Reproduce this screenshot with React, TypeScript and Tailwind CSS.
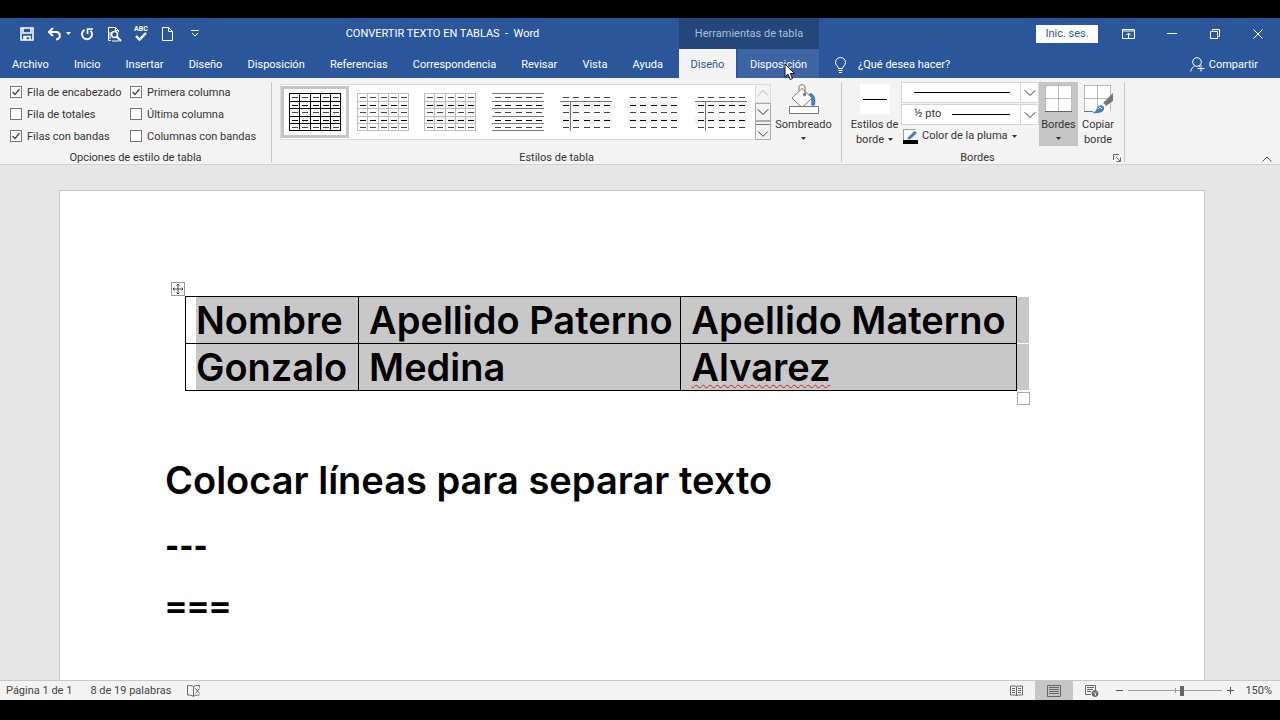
import type { ReactNode } from "react";
import { ChevronDown, ChevronUp } from "lucide-react";

const TABS = ["Archivo", "Inicio", "Insertar", "Diseño", "Disposición", "Referencias", "Correspondencia", "Revisar", "Vista", "Ayuda"];

const OPTIONS = [
  { id: "header-row", label: "Fila de encabezado", checked: true },
  { id: "first-col", label: "Primera columna", checked: true },
  { id: "total-row", label: "Fila de totales", checked: false },
  { id: "last-col", label: "Última columna", checked: false },
  { id: "banded-rows", label: "Filas con bandas", checked: true },
  { id: "banded-cols", label: "Columnas con bandas", checked: false },
];

const STYLES = [
  { name: "Tabla con cuadrícula", grid: "#000", selected: true },
  { name: "Cuadrícula clara", grid: "#bdbdbd" },
  { name: "Tabla normal 1", grid: "#bdbdbd", bands: true },
  { name: "Tabla normal 2", lines: true },
  { name: "Tabla normal 3", header: true, bands: true },
  { name: "Tabla normal 4", bands: true },
  { name: "Tabla normal 5", header: true, bands: true },
];

const COLS = [0, 10, 21, 31, 41];
const ROWS = [0, 8, 15, 23, 30];

type StyleProps = { grid?: string; bands?: boolean; lines?: boolean; header?: boolean };

function TableThumb({ grid, bands, lines, header }: StyleProps) {
  return (
    <svg width="52" height="39" viewBox="0 0 52 39" shapeRendering="crispEdges">
      {bands && [8, 23].map((y) => <rect key={y} y={y} width="52" height="8" fill="#f3f3f3" />)}
      {grid && [...COLS, 51].map((x) => <rect key={x} x={x} width="1" height="38" fill={grid} />)}
      {(grid || lines) &&
        [...ROWS, 37].map((y) => <rect key={y} y={y} width="52" height="1" fill={grid || "#777"} />)}
      {header && (
        <>
          <rect y="8" width="52" height="1" fill="#777" />
          <rect x="10" y="8" width="1" height="30" fill="#777" />
        </>
      )}
      {ROWS.map((y, r) =>
        COLS.map((x) => (
          <rect key={`${x}-${y}`} x={x + 3} y={y + 4} width="6" height="1" fill={r % 2 ? "#000" : "#444"} />
        ))
      )}
    </svg>
  );
}

function Caret({ className = "" }: { className?: string }) {
  return (
    <svg width="5" height="3" viewBox="0 0 5 3" className={className}>
      <path d="M0 0h5L2.500 3z" fill="currentColor" />
    </svg>
  );
}

function DottedGrid() {
  return (
    <>
      <rect x="1" y="1" width="27" height="27" fill="#fff" />
      <path d="M1.500 1.500h26M1.500 14.500h26M1.500 1.500v26M14.500 1.500v26M27.500 1.500v26" stroke="#777" strokeDasharray="1 1" fill="none" />
    </>
  );
}

function QatButton({ label, children, className = "" }: { label: string; children: ReactNode; className?: string }) {
  return (
    <button aria-label={label} className={`flex h-5 items-center justify-center ${className}`}>
      {children}
    </button>
  );
}

function QuickAccess() {
  return (
    <div className="flex w-[206px] shrink-0 items-center pl-4">
      <QatButton label="Guardar" className="w-[22px]">
        <svg width="14" height="14" viewBox="0 0 14 14" fill="none" stroke="#fff" strokeWidth="1.500">
          <path d="M1 1h12v12H1zM3 1v5h8V1M4 13V9.500h6V13" />
          <path d="M5.500 10v3" strokeWidth="2" />
        </svg>
      </QatButton>
      <QatButton label="Deshacer" className="ml-2 w-[26px] gap-1">
        <svg width="15" height="14" viewBox="0 0 15 14" fill="none" stroke="#fff" strokeWidth="2">
          <path d="M6 1L2 5l4 4M2 5h7c5 0 5 7 0 7.500" />
        </svg>
        <Caret className="text-white" />
      </QatButton>
      <QatButton label="Repetir" className="ml-1 w-[22px]">
        <svg width="14" height="14" viewBox="0 0 14 14" fill="none" stroke="#fff" strokeWidth="2">
          <path d="M4.500 2.800a5 5 0 1 0 6 .800" />
          <path d="M7.500 7V2H13" strokeWidth="1.700" />
        </svg>
      </QatButton>
      <QatButton label="Vista previa de impresión" className="ml-[6px] w-[20px]">
        <svg width="15" height="16" viewBox="0 0 15 16" fill="none" stroke="#fff">
          <path d="M4 14.500H1.500V1.500h7l3 3V6M8.500 1.500v3h3M5 15h7" />
          <circle cx="7.500" cy="8.500" r="3" strokeWidth="1.500" />
          <path d="M9.800 10.800L14 15" strokeWidth="2" />
          <path d="M3 6v7" />
        </svg>
      </QatButton>
      <QatButton label="Ortografía y gramática" className="ml-2 w-[18px] flex-col text-white">
        <span className="text-[7px] leading-[6px] font-bold">ABC</span>
        <svg width="12" height="9" viewBox="0 0 12 9" fill="none" stroke="#fff" strokeWidth="2.400">
          <path d="M1 4l3.500 3.500L11 1" />
        </svg>
      </QatButton>
      <QatButton label="Nuevo documento" className="ml-2 w-[18px]">
        <svg width="11" height="14" viewBox="0 0 11 14" fill="none" stroke="#fff">
          <path d="M.500.500h6l4 4v9H.500zM6.500.500v4h4" />
        </svg>
      </QatButton>
      <QatButton label="Personalizar barra" className="ml-3 w-[14px]">
        <svg width="8" height="7" viewBox="0 0 8 7" fill="none" stroke="#fff">
          <path d="M0 .500h8M1 3l3 3 3-3" />
        </svg>
      </QatButton>
    </div>
  );
}

function WindowButtons() {
  return (
    <div className="flex min-w-0 flex-1 items-center justify-end text-white">
      <button className="mr-[19px] h-[18px] w-[62px] bg-white text-[11px] leading-[18px] text-[#2b579a]">Inic. ses.</button>
      <button aria-label="Opciones de la cinta" className="flex h-7 w-[22px] items-center justify-center">
        <svg width="13" height="10" viewBox="0 0 13 10" fill="none" stroke="currentColor">
          <path d="M.500.500h12v9H.500zM0 2h13M6.500 9V4.500M4 6.500l2.500-2.500L9 6.500" />
        </svg>
      </button>
      <button aria-label="Minimizar" className="ml-[22px] flex h-7 w-[22px] items-center justify-center">
        <svg width="10" height="1" viewBox="0 0 10 1"><path d="M0 .500h10" stroke="currentColor" /></svg>
      </button>
      <button aria-label="Restaurar" className="ml-[22px] flex h-7 w-[20px] items-center justify-center">
        <svg width="10" height="10" viewBox="0 0 10 10" fill="none" stroke="currentColor">
          <path d="M.500 2.500h7v7h-7zM2.500 2.500v-2h7v7h-2" />
        </svg>
      </button>
      <button aria-label="Cerrar" className="mr-[11px] ml-[22px] flex h-7 w-[22px] items-center justify-center">
        <svg width="10" height="10" viewBox="0 0 10 10"><path d="M.500.500l9 9M9.500.500l-9 9" stroke="currentColor" /></svg>
      </button>
    </div>
  );
}

function Header() {
  return (
    <header className="bg-[#2b579a] text-white">
      <div className="flex h-[31px]">
        <div className="flex w-[679px] shrink-0 items-center">
          <QuickAccess />
          <h1 className="flex-1 pt-[2px] text-center text-[11px] whitespace-pre">CONVERTIR TEXTO EN TABLAS  -  Word</h1>
        </div>
        <div className="flex w-[140px] shrink-0 items-center justify-center bg-[#244678] pt-[2px] text-[11px] text-[#a9bfdf]">
          Herramientas de tabla
        </div>
        <WindowButtons />
      </div>
      <div className="flex h-[29px]">
        <nav className="flex w-[679px] shrink-0 items-center justify-between pt-1 pr-4 pl-3">
          {TABS.map((tab) => (
            <a key={tab} href="#">{tab}</a>
          ))}
        </nav>
        <a href="#" className="flex w-[57px] items-center justify-center bg-[#f3f3f3] pt-1 text-[#2b579a]">Diseño</a>
        <a href="#" className="relative ml-[2px] flex w-[81px] items-center justify-center bg-[#3e64a4] pt-1">
          Disposición
          <svg width="12" height="18" viewBox="0 0 12 18" className="absolute top-[14px] left-[46px] z-10">
            <path d="M1 1v13l3-2.800L6.200 16.500l2.300-1L6.300 10.500H10.500z" fill="#fff" stroke="#111" />
          </svg>
        </a>
        <div className="flex flex-1 items-center pt-[2px] pl-4">
          <svg width="11" height="16" viewBox="0 0 11 16" fill="none" stroke="#fff">
            <path d="M3.500 11.500c0-2-3-3-3-6a5 5 0 0 1 10 0c0 3-3 4-3 6zM3.500 13.500h4M4 15.500h3" />
          </svg>
          <a href="#" className="ml-3 pt-[2px]">¿Qué desea hacer?</a>
          <button className="mr-[22px] ml-auto flex items-center gap-1">
            <svg width="15" height="15" viewBox="0 0 15 15" fill="none" stroke="#fff">
              <circle cx="7" cy="5" r="4.300" />
              <path d="M.700 14.500c.500-3 2-4.500 4-5.500M9 9l1 .800M11 8v6.500M7.500 11.500H14.500" />
            </svg>
            <span className="pt-[2px]">Compartir</span>
          </button>
        </div>
      </div>
    </header>
  );
}

function Group({ label, className, launcher, children }: { label: string; className: string; launcher?: ReactNode; children: ReactNode }) {
  return (
    <section className={`flex shrink-0 flex-col ${className}`}>
      <div className="flex h-[72px]">{children}</div>
      <div className="flex items-center leading-3">
        <h2 className="flex-1 text-center">{label}</h2>
        {launcher}
      </div>
    </section>
  );
}

const Divider = () => <div className="my-[2px] w-px shrink-0 bg-[#c8c8c8]" />;

function PenSelect({ label, text, from }: { label: string; text?: string; from: string }) {
  return (
    <div className="relative flex h-[21px] items-center border border-[#d4d4d4] bg-white">
      <select aria-label={label} className="h-full w-full appearance-none pl-3 outline-none">
        <option>{text}</option>
      </select>
      <div className={`pointer-events-none absolute right-[28px] h-px bg-black ${from}`} />
      <div className="pointer-events-none absolute right-0 flex h-full w-[18px] items-center justify-center border-l border-[#d4d4d4]">
        <ChevronDown size={20} strokeWidth={1.200} className="shrink-0 text-[#333]" />
      </div>
    </div>
  );
}

function Ribbon() {
  return (
    <div className="flex h-[87px] overflow-hidden border-b border-[#d2d2d2] bg-[#f3f3f3] pt-[2px] text-[#333]">
      <Group label="Opciones de estilo de tabla" className="w-[271px]">
        <div className="grid grid-cols-[120px_1fr] content-start gap-y-[2px] pt-[2px] pl-[10px]">
          {OPTIONS.map((o) => (
            <label key={o.id} htmlFor={o.id} className="flex h-5 items-center gap-[5px] whitespace-nowrap">
              <span className="grid">
                <input
                  id={o.id}
                  type="checkbox"
                  defaultChecked={o.checked}
                  className="peer size-3 appearance-none border border-[#777] bg-white [grid-area:1/1]"
                />
                <svg width="12" height="12" viewBox="0 0 12 12" fill="none" stroke="#444" strokeWidth="1.300" className="pointer-events-none invisible [grid-area:1/1] peer-checked:visible">
                  <path d="M2.500 6l2.500 2.500L9.500 3" />
                </svg>
              </span>
              <span className="pt-[2px]">{o.label}</span>
            </label>
          ))}
        </div>
      </Group>
      <Divider />
      <Group label="Estilos de tabla" className="w-[569px]">
        <div className="mt-1 ml-2 flex h-[56px] w-[491px]">
          <div className="flex flex-1 items-center border border-r-0 border-[#dcdcdc] bg-white">
            {STYLES.map((s) => (
              <button
                key={s.name}
                aria-label={s.name}
                className={`flex h-[52px] flex-1 items-center justify-center border-[3px] ${s.selected ? "border-[#c6c6c6]" : "border-transparent"}`}
              >
                <TableThumb grid={s.grid} bands={s.bands} lines={s.lines} header={s.header} />
              </button>
            ))}
          </div>
          <div className="flex w-4 flex-col">
            <button aria-label="Fila anterior" className="flex flex-1 items-center justify-center overflow-hidden border border-[#dcdcdc] text-[#bbb]">
              <ChevronUp size={20} strokeWidth={1.200} className="shrink-0" />
            </button>
            <button aria-label="Fila siguiente" className="flex flex-1 items-center justify-center overflow-hidden border border-[#ababab] text-[#333]">
              <ChevronDown size={20} strokeWidth={1.200} className="shrink-0" />
            </button>
            <button aria-label="Más estilos" className="flex flex-1 flex-col items-center overflow-hidden border border-[#ababab] text-[#333]">
              <span className="mt-[2px] h-px w-full shrink-0 bg-[#777]" />
              <ChevronDown size={18} strokeWidth={1.200} className="shrink-0" />
            </button>
          </div>
        </div>
        <button className="flex w-[65px] flex-col items-center pt-1 leading-[15px]">
          <svg width="31" height="31" viewBox="0 0 31 31" fill="none" stroke="#777">
            <path d="M22 9c5 1 6 6 5 12-1 1-3 1-4 0 1-4 0-7-3-9z" fill="#4a7ebb" stroke="none" />
            <path d="M4 14L14 4.500 24 14 14 23.500z" fill="#fff" />
            <path d="M11 7V3c0-3 6-3 6 0v7" />
            <circle cx="16.500" cy="10.500" r="1.300" fill="#777" />
            <path d="M1.500 22.500h29v7h-29z" fill="#fff" />
          </svg>
          <span className="mt-[2px]">Sombreado</span>
          <Caret className="mt-[5px]" />
        </button>
      </Group>
      <Divider />
      <Group
        label="Bordes"
        className="w-[282px]"
        launcher={
          <button aria-label="Bordes y sombreado" className="mr-[3px]">
            <svg width="8" height="8" viewBox="0 0 8 8" fill="none" stroke="#666">
              <path d="M.500 6V.500H6M3 3l4 4M7.500 3.500v4h-4" />
            </svg>
          </button>
        }
      >
        <button className="flex w-[59px] flex-col items-center pt-1 pl-[6px] leading-[15px] whitespace-nowrap">
          <span className="mb-[3px] flex h-[30px] w-[30px] shrink-0 items-center justify-center bg-white">
            <span className="h-px w-6 bg-black" />
          </span>
          <span>Estilos de</span>
          <span className="flex items-center gap-1">borde <Caret /></span>
        </button>
        <div className="flex w-[138px] flex-col gap-px pt-[2px]">
          <PenSelect label="Estilo de pluma" from="left-3" />
          <PenSelect label="Grosor de pluma" text="½ pto" from="left-[50px]" />
          <button className="flex h-5 items-center gap-1 whitespace-nowrap">
            <svg width="15" height="15" viewBox="0 0 15 15" className="ml-[2px]">
              <path d="M.500 11V.500h12" stroke="#999" fill="#fff" />
              <path d="M5 8.500L11.500 2 14 4 7.500 10 4.500 10.500z" fill="#4a7ebb" />
              <rect y="11" width="15" height="4" />
            </svg>
            Color de la pluma
            <Caret />
          </button>
        </div>
        <button className="mt-[2px] flex h-[64px] w-[39px] flex-col items-center bg-[#c6c6c6] pt-[2px] leading-[15px]">
          <svg width="29" height="31" viewBox="0 0 29 31">
            <DottedGrid />
            <path d="M1 27.500h27" stroke="#666" />
          </svg>
          <span className="mt-[2px]">Bordes</span>
          <Caret className="mt-[5px]" />
        </button>
        <button className="mt-[2px] flex w-[40px] flex-col items-center pt-[2px] leading-[15px]">
          <svg width="31" height="33" viewBox="0 0 31 33">
            <DottedGrid />
            <path d="M1 27.500h9" stroke="#4a7ebb" />
            <path d="M30 9v8l-7 5-3-3z" fill="#777" />
            <path d="M19 19l3.500 3.500" stroke="#fff" strokeWidth="1.500" />
            <path d="M9 29c3-1 4-2 5-5 1-3 5-4 7-1 1 4-3 7-12 6z" fill="#4a7ebb" />
            <path d="M15 25c1-2 3-2 4 0" stroke="#fff" fill="none" />
          </svg>
          <span>Copiar</span>
          <span>borde</span>
        </button>
      </Group>
      <Divider />
      <button aria-label="Contraer la cinta" className="mt-auto mr-2 mb-[2px] ml-auto">
        <svg width="10" height="6" viewBox="0 0 10 6" fill="none" stroke="#555"><path d="M.500 5.500L5 1l4.500 4.500" /></svg>
      </button>
    </div>
  );
}

const CELL = "border border-black bg-[#c8c8c8] pl-[10px] pr-[10px] bg-clip-padding";

function RowEnd() {
  return <td className="w-3 border-b border-white bg-[#c8c8c8] bg-clip-padding" />;
}

function Document() {
  return (
    <main className="flex min-h-0 flex-1 overflow-hidden bg-[#e6e6e6] pr-4">
      <article className="mx-auto mt-[25px] w-[1146px] border border-b-0 border-[#c8c8c8] bg-white pt-[105px] pl-[105px] font-['Century_Gothic','Inter',sans-serif] text-[38px] leading-[46px] font-semibold text-black">
        <div className="relative ml-5 w-fit">
          <button aria-label="Mover tabla" className="absolute -top-[14px] -left-[14px] flex size-[14px] items-center justify-center border border-[#999] bg-white">
            <svg width="10" height="10" viewBox="0 0 10 10" fill="none" stroke="#444">
              <path d="M5 0v10M0 5h10M3.500 1.500L5 0l1.500 1.500M3.500 8.500L5 10l1.500-1.500M1.500 3.500L0 5l1.500 1.500M8.500 3.500L10 5 8.500 6.500" />
            </svg>
          </button>
          <table className="w-[844px] table-fixed border-collapse whitespace-nowrap">
            <colgroup>
              <col className="w-[173px]" />
              <col className="w-[322px]" />
              <col className="w-[336px]" />
              <col />
            </colgroup>
            <tbody>
              <tr>
                <td className="border border-black pl-[10px]"><div className="bg-[#c8c8c8]">Nombre</div></td>
                <td className={CELL}>Apellido Paterno</td>
                <td className={CELL}>Apellido Materno</td>
                <RowEnd />
              </tr>
              <tr>
                <td className="border border-black pl-[10px]"><div className="bg-[#c8c8c8]">Gonzalo</div></td>
                <td className={CELL}>Medina</td>
                <td className={CELL}>
                  <span className="underline decoration-[#c8202a] decoration-wavy decoration-1 underline-offset-[3px]">Alvarez</span>
                </td>
                <RowEnd />
              </tr>
            </tbody>
          </table>
          <span className="absolute -right-px -bottom-[14px] size-[13px] border border-[#ababab] bg-white" />
        </div>
        <p className="mt-[66px]">Colocar líneas para separar texto</p>
        <p className="mt-[18px] font-['Lato'] font-black">---</p>
        <p className="mt-[15px] font-['Lato'] font-black">===</p>
      </article>
    </main>
  );
}

function StatusBar() {
  return (
    <footer className="flex h-5 items-center border-t border-[#c8c8c8] bg-[#f3f3f3] pl-[6px] text-[11px] text-[#444]">
      <span className="pt-[2px]">Página 1 de 1</span>
      <span className="ml-[18px] pt-[2px]">8 de 19 palabras</span>
      <button aria-label="Revisión" className="ml-4">
        <svg width="14" height="12" viewBox="0 0 14 12" fill="none" stroke="#666">
          <path d="M6.500 11V1.500C5 .500 3 .500.500.500v9.500c2 0 4 0 6 1.500 1-1 3-1.500 6-1.500M6.500 1.500c1-.700 3-1 6-1v2M8.500 3.500l4 5M12.500 3.500l-4 5" />
        </svg>
      </button>
      <div className="ml-auto flex h-full items-center">
        <button aria-label="Modo de lectura" className="flex h-full w-[38px] items-center justify-center">
          <svg width="13" height="12" viewBox="0 0 13 12" fill="none" stroke="#666">
            <path d="M.500 1h5l1 1 1-1h5v9h-5l-1 1-1-1h-5zM6.500 2v9M2 3.500h3M2 5.500h3M2 7.500h3M8 3.500h3M8 5.500h3M8 7.500h3" />
          </svg>
        </button>
        <button aria-label="Diseño de impresión" className="flex h-full w-[38px] items-center justify-center bg-[#c6c6c6]">
          <svg width="14" height="12" viewBox="0 0 14 12" fill="none" stroke="#666">
            <path d="M.500.500h13v11H.500zM2 2.500h10M2 4.500h10M2 6.500h10M2 8.500h10" />
          </svg>
        </button>
        <button aria-label="Diseño web" className="flex h-full w-[38px] items-center justify-center">
          <svg width="14" height="12" viewBox="0 0 14 12" fill="none" stroke="#666">
            <path d="M6 9.500H.500v-9h10V5M2 2.500h7M2 4.500h6M2 6.500h4" />
            <circle cx="10" cy="8.500" r="3" fill="#666" />
            <path d="M8.500 7.500l2 1v2M11 6.500l1 1" stroke="#f3f3f3" />
          </svg>
        </button>
        <button aria-label="Alejar" className="ml-[2px] flex h-full w-3 items-center justify-center">
          <span className="h-px w-[7px] bg-[#555]" />
        </button>
        <div className="relative mr-[2px] ml-[3px] flex w-[94px] items-center">
          <span className="absolute left-[47px] h-[5px] w-px bg-[#999]" />
          <input
            type="range"
            aria-label="Zoom"
            min={0}
            max={100}
            defaultValue={58}
            className="relative h-[10px] w-full appearance-none bg-[linear-gradient(#a0a0a0,#a0a0a0)] bg-[length:100%_1px] bg-center bg-no-repeat [&::-webkit-slider-thumb]:h-[10px] [&::-webkit-slider-thumb]:w-1 [&::-webkit-slider-thumb]:appearance-none [&::-webkit-slider-thumb]:bg-[#666]"
          />
        </div>
        <button aria-label="Acercar" className="flex h-full w-3 items-center justify-center">
          <svg width="7" height="7" viewBox="0 0 7 7"><path d="M0 3.500h7M3.500 0v7" stroke="#555" /></svg>
        </button>
        <span className="mr-2 ml-2 w-7 pt-[2px] text-right">150%</span>
      </div>
    </footer>
  );
}

export default function App() {
  return (
    <div className="flex h-screen min-w-[1180px] flex-col overflow-hidden bg-black pt-[18px] pb-[20px] font-['Segoe_UI','Roboto',sans-serif] text-[11px]">
      <Header />
      <Ribbon />
      <Document />
      <StatusBar />
    </div>
  );
}
